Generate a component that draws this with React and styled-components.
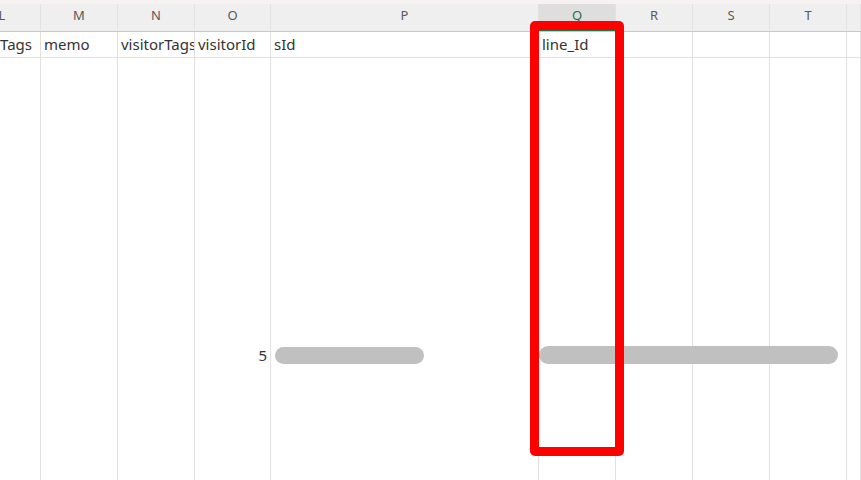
import React from 'react';
import styled, { createGlobalStyle } from 'styled-components';

const GlobalStyle = createGlobalStyle`
  html, body {
    margin: 0;
    background: #ffffff;
    overflow: hidden;
  }
`;

const COLS = '77px 77px 77px 76px 268px 77px 77px 77px 77px 1fr';

const Sheet = styled.div`
  position: relative;
  width: 861px;
  height: 480px;
  overflow: hidden;
  font-family: 'Noto Sans', 'Noto Sans CJK JP', sans-serif;
`;

const Track = styled.div`
  margin-left: -36px;
  display: flex;
  flex-direction: column;
  height: 100%;
`;

const TopStrip = styled.div`
  height: 4px;
  background: #f6f2f2;
`;

const Row = styled.div`
  display: grid;
  grid-template-columns: ${COLS};
  height: ${p => p.h}px;
  border-bottom: ${p => (p.line ? `1px solid ${p.line}` : 'none')};
  flex: ${p => (p.grow ? 1 : 'none')};
`;

const HeadCell = styled.div`
  box-sizing: border-box;
  display: flex;
  align-items: center;
  justify-content: center;
  font-size: 13px;
  color: ${p => (p.active ? '#1e7145' : '#595959')};
  background: ${p => (p.active ? '#dedede' : '#efefef')};
  border-right: 1px solid #e2e2e2;
  border-bottom: ${p => (p.active ? '2px solid #217346' : '2px solid transparent')};
  padding-bottom: 4px;
`;

const Cell = styled.div`
  box-sizing: border-box;
  border-right: 1px solid #e1e1e1;
  padding: 0 3px;
  padding-left: ${p => p.indent || 3}px;
  font-size: 15px;
  line-height: 25px;
  color: #333333;
  white-space: nowrap;
  overflow: hidden;
`;

const NumCell = styled(Cell)`
  text-align: right;
  padding-top: 287px;
  line-height: 20px;
  padding-right: 3px;
`;

const Redact = styled.div`
  position: absolute;
  background: #c0c0c0;
  border-radius: 9px;
  filter: blur(0.4px);
`;

const Highlight = styled.div`
  position: absolute;
  left: 530px;
  top: 21px;
  width: 94px;
  height: 435px;
  box-sizing: border-box;
  border: 9px solid #ff0000;
  border-radius: 5px;
`;

const letters = ['L', 'M', 'N', 'O', 'P', 'Q', 'R', 'S', 'T', ''];
const titles = ['Tags', 'memo', 'visitorTags', 'visitorId', 'sId', 'line_Id', '', '', '', ''];

const App = () => (
  <Sheet>
    <GlobalStyle />
    <Track>
      <TopStrip />
      <Row h={27} line="#c8c8c8">
        {letters.map(l => (
          <HeadCell key={l || 'end'} active={l === 'Q'}>{l}</HeadCell>
        ))}
      </Row>
      <Row h={25} line="#e1e1e1">
        {titles.map((t, i) => (
          <Cell key={i} indent={i === 0 ? 36 : 3}>{t}</Cell>
        ))}
      </Row>
      <Row grow>
        {letters.map((l, i) =>
          l === 'O' ? <NumCell key={i}>5</NumCell> : <Cell key={i} />
        )}
      </Row>
    </Track>

    {/* redacted values */}
    <Redact style={{ left: 275, top: 347, width: 149, height: 17 }} />
    <Redact style={{ left: 539, top: 346, width: 299, height: 18 }} />

    <Highlight />
  </Sheet>
);

export default App;
